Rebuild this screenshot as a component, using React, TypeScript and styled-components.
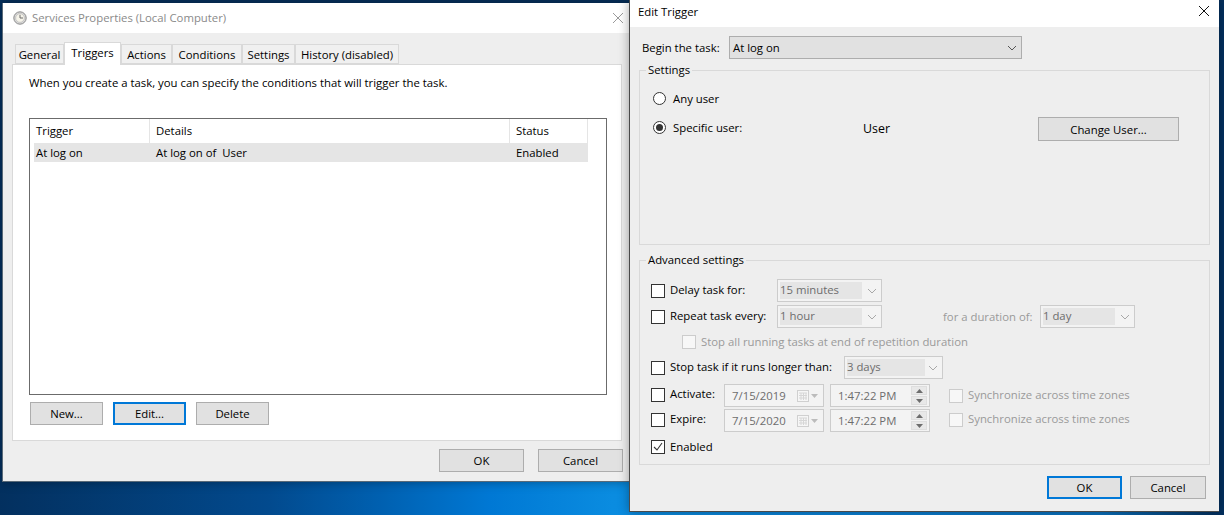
import React from "react";
import styled, { createGlobalStyle } from "styled-components";

const Global = createGlobalStyle`
  html, body { margin: 0; padding: 0; width: 1224px; height: 515px; overflow: hidden; }
  body { font-family: "Open Sans", "Noto Sans", sans-serif; font-size: 11.35px; color: #000; }
  * { box-sizing: border-box; }
`;

const Desktop = styled.div`
  position: relative;
  width: 1224px;
  height: 515px;
  overflow: hidden;
  background:
    linear-gradient(180deg, #06305c 0, #06305c 3px, transparent 3px),
    linear-gradient(90deg, #03305f 0, #024a8e 22%, #0060b0 31%, #0078d4 40%, #0a8ce0 50%, #0a80d4 70%, #0a70bc 90%, #03305f 99.6%);
`;

const Win = styled.div<{ $x: number; $y: number; $w: number; $h: number; $border: string }>`
  position: absolute;
  left: ${(p) => p.$x}px;
  top: ${(p) => p.$y}px;
  width: ${(p) => p.$w}px;
  height: ${(p) => p.$h}px;
  background: #eeeeee;
  display: flex;
  flex-direction: column;
  border-left: 1px solid ${(p) => p.$border};
  border-bottom: 1px solid ${(p) => p.$border};
  box-shadow: 0 0 10px rgba(0, 0, 0, 0.35);
`;

const TitleBar = styled.div<{ $h: number; $pad: number; $color: string; $lift?: number }>`
  height: ${(p) => p.$h}px;
  flex: none;
  background: #fff;
  display: flex;
  align-items: center;
  gap: 5px;
  padding-left: ${(p) => p.$pad}px;
  padding-bottom: ${(p) => p.$lift ?? 0}px;
  color: ${(p) => p.$color};
`;

const TitleText = styled.span<{ $lift?: number }>`
  flex: 1;
  margin-bottom: ${(p) => p.$lift ?? 0}px;
`;

const CloseBtn = styled.svg<{ $right: number; $lift: number }>`
  width: 12px;
  height: 12px;
  margin-right: ${(p) => p.$right}px;
  margin-bottom: ${(p) => p.$lift}px;
  flex: none;
`;

const LeftBody = styled.div`
  flex: 1;
  padding: 9px 7px 0 9px;
  display: flex;
  flex-direction: column;
`;

const Tabs = styled.div`
  display: flex;
  height: 22px;
  padding-left: 3px;
  align-items: flex-end;
  position: relative;
  z-index: 1;
`;

const Tab = styled.div<{ $w: number; $active?: boolean }>`
  width: ${(p) => p.$w}px;
  height: ${(p) => (p.$active ? 23 : 20)}px;
  margin-bottom: ${(p) => (p.$active ? -1 : 0)}px;
  background: ${(p) => (p.$active ? "#fff" : "#f0f0f0")};
  border: 1px solid #d9d9d9;
  border-bottom: ${(p) => (p.$active ? "none" : "1px solid #d9d9d9")};
  display: flex;
  align-items: center;
  justify-content: center;
  white-space: nowrap;
  padding-bottom: ${(p) => (p.$active ? 3 : 0)}px;
`;

const Page = styled.div`
  height: 377px;
  width: 610px;
  background: #fff;
  border: 1px solid #d9d9d9;
  padding: 10px 15px 0 16px;
  display: flex;
  flex-direction: column;
`;

const Intro = styled.div`
  height: 18px;
  line-height: 15px;
  white-space: nowrap;
`;

const ListBox = styled.div`
  margin-top: 25px;
  height: 277px;
  width: 578px;
  border: 1px solid #6b6b6b;
  padding-left: 4px;
  display: flex;
  flex-direction: column;
`;

const ListRow = styled.div<{ $selected?: boolean; $h: number }>`
  display: grid;
  grid-template-columns: 116px 360px 78px;
  width: 554px;
  height: ${(p) => p.$h}px;
  flex: none;
  background: ${(p) => (p.$selected ? "#e5e5e5" : "#fff")};
`;

const Cell = styled.div<{ $head?: boolean; $pad: number }>`
  display: flex;
  align-items: center;
  padding-left: ${(p) => p.$pad}px;
  padding-bottom: ${(p) => (p.$head ? 2 : 0)}px;
  border-right: ${(p) => (p.$head ? "1px solid #e5e5e5" : "none")};
  white-space: pre;
`;

const ButtonRow = styled.div`
  display: flex;
  gap: 10px;
  margin: 7px 0 0 1px;
`;

const Btn = styled.div<{ $w: number; $h?: number; $focus?: boolean }>`
  width: ${(p) => p.$w}px;
  height: ${(p) => p.$h ?? 23}px;
  flex: none;
  background: #e1e1e1;
  border: ${(p) => (p.$focus ? "2px solid #0078d7" : "1px solid #adadad")};
  display: flex;
  align-items: center;
  justify-content: center;
`;

const ChangeBtn = styled(Btn)`
  align-self: flex-start;
`;

const Footer = styled.div<{ $gap: number; $top: number; $right: number }>`
  display: flex;
  justify-content: flex-end;
  gap: ${(p) => p.$gap}px;
  margin-top: ${(p) => p.$top}px;
  margin-right: ${(p) => p.$right}px;
`;

const RightBody = styled.div`
  flex: 1;
  padding: 9px 8px 0 9px;
  display: flex;
  flex-direction: column;
`;

const BeginRow = styled.div`
  display: flex;
  align-items: center;
  height: 23px;
  padding-left: 3px;
`;

const BeginLabel = styled.div`
  width: 87px;
  flex: none;
`;

const MainSelect = styled.div<{ $w: number }>`
  width: ${(p) => p.$w}px;
  height: 23px;
  background: #e1e1e1;
  border: 1px solid #adadad;
  display: flex;
  align-items: center;
  justify-content: space-between;
  padding: 0 0 0 3px;
`;

const Group = styled.div<{ $h: number; $top: number }>`
  position: relative;
  width: 571px;
  height: ${(p) => p.$h}px;
  margin-top: ${(p) => p.$top}px;
  border: 1px solid #d9d9d9;
  padding: 0 0 0 11px;
  display: flex;
  flex-direction: column;
`;

const Legend = styled.div`
  position: absolute;
  top: -10px;
  left: 6px;
  padding: 0 2px;
  background: #eeeeee;
  line-height: 18px;
`;

const RadioRow = styled.div<{ $top: number; $h: number }>`
  display: flex;
  align-items: center;
  height: ${(p) => p.$h}px;
  margin-top: ${(p) => p.$top}px;
  padding-left: 2px;
`;

const Radio = styled.span<{ $on?: boolean }>`
  width: 13px;
  height: 13px;
  flex: none;
  border-radius: 50%;
  border: 1px solid #333;
  background: #fff;
  margin-right: 7px;
  display: flex;
  align-items: center;
  justify-content: center;
  &::after {
    content: "";
    display: ${(p) => (p.$on ? "block" : "none")};
    width: 7px;
    height: 7px;
    border-radius: 50%;
    background: #333;
  }
`;

const RadioLabel = styled.span<{ $w?: number }>`
  width: ${(p) => (p.$w ? `${p.$w}px` : "auto")};
  flex: none;
`;

const UserName = styled.span`
  width: 175px;
  flex: none;
  font-size: 12.4px;
  padding-top: 2px;
`;

const Row = styled.div<{ $top: number; $h?: number; $indent?: number }>`
  display: flex;
  align-items: center;
  height: ${(p) => p.$h ?? 23}px;
  margin-top: ${(p) => p.$top}px;
  padding-left: ${(p) => p.$indent ?? 0}px;
  white-space: nowrap;
`;

const Check = styled.span<{ $disabled?: boolean; $lift?: number; $left?: number }>`
  width: 14px;
  height: 14px;
  flex: none;
  background: ${(p) => (p.$disabled ? "#f7f7f7" : "#fff")};
  border: 1px solid ${(p) => (p.$disabled ? "#cccccc" : "#333")};
  margin-right: 5px;
  margin-left: ${(p) => p.$left ?? 0}px;
  margin-bottom: ${(p) => p.$lift ?? 0}px;
  display: flex;
  align-items: center;
  justify-content: center;
`;

const RowLabel = styled.span<{ $w?: number; $muted?: boolean; $left?: number; $lift?: number }>`
  width: ${(p) => (p.$w ? `${p.$w}px` : "auto")};
  flex: none;
  color: ${(p) => (p.$muted ? "#9a9a9a" : "#000")};
  margin-left: ${(p) => p.$left ?? 0}px;
  margin-bottom: ${(p) => p.$lift ?? 2}px;
`;

const DisSelect = styled.div<{ $w: number; $inner: number }>`
  width: ${(p) => p.$w}px;
  height: 23px;
  flex: none;
  background: #f3f3f3;
  border: 1px solid #cccccc;
  padding: 2px 0 2px 2px;
  display: flex;
  align-items: center;
  justify-content: space-between;
  color: #6d6d6d;
  & > span {
    width: ${(p) => p.$inner}px;
    height: 17px;
    background: #e5e5e5;
    line-height: 15px;
    flex: none;
  }
`;

const ChevronWrap = styled.svg`
  width: 10px;
  height: 6px;
  margin-right: 4px;
  flex: none;
`;

const DateBox = styled.div<{ $w: number; $left: number }>`
  width: ${(p) => p.$w}px;
  height: 23px;
  flex: none;
  margin-left: ${(p) => p.$left}px;
  background: #f3f3f3;
  border: 1px solid #cccccc;
  color: #6d6d6d;
  display: flex;
  align-items: center;
  justify-content: space-between;
  padding: 0 1px 0 7px;
  & > span {
    margin-bottom: 1px;
  }
`;

const DateIcons = styled.svg`
  width: 22px;
  height: 12px;
  margin-right: 3px;
  flex: none;
`;

const Spin = styled.div`
  width: 16px;
  height: 19px;
  flex: none;
  display: flex;
  flex-direction: column;
  gap: 1px;
  margin-right: 1px;
`;

const SpinPart = styled.div`
  flex: 1;
  background: #e8e8e8;
  border: 1px solid #dedede;
  display: flex;
  align-items: center;
  justify-content: center;
`;

const Chevron = ({ color }: { color: string }) => (
  <ChevronWrap viewBox="0 0 10 6">
    <path d="M1 1l4 4 4-4" fill="none" stroke={color} strokeWidth="1" />
  </ChevronWrap>
);

const X = ({ color, right, lift }: { color: string; right: number; lift: number }) => (
  <CloseBtn $right={right} $lift={lift} viewBox="0 0 12 12">
    <path d="M1 1l10 10M11 1L1 11" stroke={color} strokeWidth="1" fill="none" />
  </CloseBtn>
);

const Tri = ({ up }: { up?: boolean }) => (
  <svg width="7" height="4" viewBox="0 0 7 4">
    <path d={up ? "M3.5 0L7 4H0z" : "M0 0h7L3.5 4z"} fill="#6d6d6d" />
  </svg>
);

const DateValue = ({ value }: { value: string }) => (
  <>
    <span>{value}</span>
    <DateIcons viewBox="0 0 22 12">
      <rect x="0.5" y="0.5" width="11" height="11" fill="#f6f6f6" stroke="#d0d0d0" />
      <path d="M2 3h8M2 5.5h8M2 8h8M4 3v7M6.500 3v7M9 3v7" stroke="#d6d6d6" strokeWidth="1" fill="none" />
      <path d="M14 4h7l-3.500 4z" fill="#bcbcbc" />
    </DateIcons>
  </>
);

const TimeValue = () => (
  <>
    <span>1:47:22 PM</span>
    <Spin>
      <SpinPart><Tri up /></SpinPart>
      <SpinPart><Tri /></SpinPart>
    </Spin>
  </>
);

const CheckMark = () => (
  <svg width="12" height="12" viewBox="0 0 12 12">
    <path d="M2 6l3 3 5-7" fill="none" stroke="#333" strokeWidth="1.100" />
  </svg>
);

const ClockIcon = () => (
  <svg width="14" height="14" viewBox="0 0 14 14">
    <circle cx="7" cy="7" r="6.200" fill="#d8d8d8" stroke="#8a8a8a" />
    <circle cx="7" cy="7" r="4.300" fill="#f6f4ea" stroke="#b5b5b5" strokeWidth="0.600" />
    <path d="M7 3.800V7h3" fill="none" stroke="#6a6a6a" strokeWidth="1" />
  </svg>
);

export default function App() {
  return (
    <Desktop>
      <Global />
      <Win $x={2} $y={3} $w={628} $h={479} $border="#5a6a78">
        <TitleBar $h={30} $pad={10} $color="#8a8a8a">
          <ClockIcon />
          <TitleText $lift={2}>Services Properties (Local Computer)</TitleText>
          <X color="#9a9a9a" right={6} lift={0} />
        </TitleBar>
        <LeftBody>
          <Tabs>
            <Tab $w={49}>General</Tab>
            <Tab $w={57} $active>Triggers</Tab>
            <Tab $w={51}>Actions</Tab>
            <Tab $w={70}>Conditions</Tab>
            <Tab $w={53}>Settings</Tab>
            <Tab $w={104}>History (disabled)</Tab>
          </Tabs>
          <Page>
            <Intro>When you create a task, you can specify the conditions that will trigger the task.</Intro>
            <ListBox>
              <ListRow $h={24}>
                <Cell $head $pad={2}>Trigger</Cell>
                <Cell $head $pad={6}>Details</Cell>
                <Cell $head $pad={6}>Status</Cell>
              </ListRow>
              <ListRow $h={19} $selected>
                <Cell $pad={2}>At log on</Cell>
                <Cell $pad={6}>At log on of  User</Cell>
                <Cell $pad={6}>Enabled</Cell>
              </ListRow>
            </ListBox>
            <ButtonRow>
              <Btn $w={73}>New...</Btn>
              <Btn $w={73} $focus>Edit...</Btn>
              <Btn $w={73}>Delete</Btn>
            </ButtonRow>
          </Page>
          <Footer $gap={14} $top={8} $right={0}>
            <Btn $w={85}>OK</Btn>
            <Btn $w={85}>Cancel</Btn>
          </Footer>
        </LeftBody>
      </Win>
      <Win $x={629} $y={0} $w={590} $h={512} $border="#4a4a4a">
        <TitleBar $h={27} $pad={8} $color="#000" $lift={4}>
          <TitleText>Edit Trigger</TitleText>
          <X color="#111" right={9} lift={2} />
        </TitleBar>
        <RightBody>
          <BeginRow>
            <BeginLabel>Begin the task:</BeginLabel>
            <MainSelect $w={293}>
              At log on
              <Chevron color="#555" />
            </MainSelect>
          </BeginRow>
          <Group $h={175} $top={11}>
            <Legend>Settings</Legend>
            <RadioRow $top={16} $h={23}>
              <Radio />
              <RadioLabel>Any user</RadioLabel>
            </RadioRow>
            <RadioRow $top={7} $h={21}>
              <Radio $on />
              <RadioLabel $w={190}>Specific user:</RadioLabel>
              <UserName>User</UserName>
              <ChangeBtn $w={141} $h={24}>Change User...</ChangeBtn>
            </RadioRow>
          </Group>
          <Group $h={205} $top={15}>
            <Legend>Advanced settings</Legend>
            <Row $top={18}>
              <Check />
              <RowLabel $w={107}>Delay task for:</RowLabel>
              <DisSelect $w={105} $inner={82}>
                <span>15 minutes</span>
                <Chevron color="#a8a8a8" />
              </DisSelect>
            </Row>
            <Row $top={3}>
              <Check />
              <RowLabel $w={107}>Repeat task every:</RowLabel>
              <DisSelect $w={105} $inner={82}>
                <span>1 hour</span>
                <Chevron color="#a8a8a8" />
              </DisSelect>
              <RowLabel $w={97} $muted $left={61} $lift={0}>for a duration of:</RowLabel>
              <DisSelect $w={95} $inner={72}>
                <span>1 day</span>
                <Chevron color="#a8a8a8" />
              </DisSelect>
            </Row>
            <Row $top={3} $h={22} $indent={31}>
              <Check $disabled />
              <RowLabel $muted>Stop all running tasks at end of repetition duration</RowLabel>
            </Row>
            <Row $top={3}>
              <Check />
              <RowLabel $w={174}>Stop task if it runs longer than:</RowLabel>
              <DisSelect $w={99} $inner={78}>
                <span>3 days</span>
                <Chevron color="#a8a8a8" />
              </DisSelect>
            </Row>
            <Row $top={5}>
              <Check $lift={2} />
              <RowLabel $w={54} $lift={4}>Activate:</RowLabel>
              <DateBox $w={100} $left={0}><DateValue value="7/15/2019" /></DateBox>
              <DateBox $w={100} $left={6}><TimeValue /></DateBox>
              <Check $disabled $left={19} />
              <RowLabel $muted $lift={3}>Synchronize across time zones</RowLabel>
            </Row>
            <Row $top={2}>
              <Check $lift={2} />
              <RowLabel $w={54} $lift={4}>Expire:</RowLabel>
              <DateBox $w={100} $left={0}><DateValue value="7/15/2020" /></DateBox>
              <DateBox $w={100} $left={6}><TimeValue /></DateBox>
              <Check $disabled $left={19} $lift={2} />
              <RowLabel $muted $lift={4}>Synchronize across time zones</RowLabel>
            </Row>
            <Row $top={4} $h={22}>
              <Check><CheckMark /></Check>
              <RowLabel>Enabled</RowLabel>
            </Row>
          </Group>
          <Footer $gap={8} $top={11} $right={5}>
            <Btn $w={75} $focus>OK</Btn>
            <Btn $w={76}>Cancel</Btn>
          </Footer>
        </RightBody>
      </Win>
    </Desktop>
  );
}
